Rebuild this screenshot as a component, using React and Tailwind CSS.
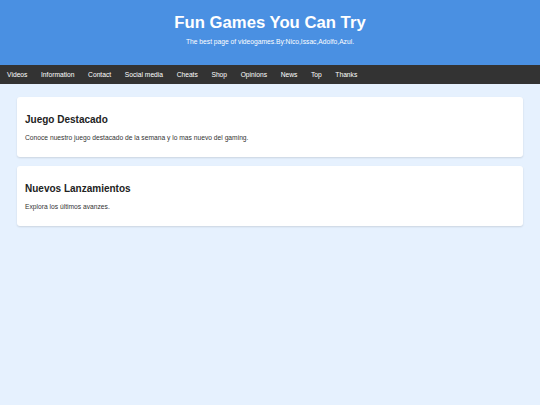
const navItems = ['Videos', 'Information', 'Contact', 'Social media', 'Cheats', 'Shop', 'Opinions', 'News', 'Top', 'Thanks'];

const sections = [
  {
    title: 'Juego Destacado',
    text: 'Conoce nuestro juego destacado de la semana y lo mas nuevo del gaming.',
  },
  {
    title: 'Nuevos Lanzamientos',
    text: 'Explora los últimos avanzes.',
  },
];

const Card = ({ title, text }) => (
  <section className="rounded-[3px] bg-white px-[8px] pt-[17px] pb-[15px] shadow-[0_1px_2px_rgba(0,0,0,0.12)]">
    <h2 className="text-[10px] leading-[12px] font-bold text-[#222]">{title}</h2>
    <p className="mt-[8px] text-[6.7px] leading-[8px] text-[#333]">{text}</p>
  </section>
);

export default function App() {
  return (
    <div className="min-h-screen bg-[#e6f1fe] font-['Liberation_Sans',Arial,sans-serif]">
      <header className="bg-[#4a90e2] pt-[13px] pb-[19px] text-center text-white">
        <h1 className="text-[16.7px] leading-[20px] font-bold">Fun Games You Can Try</h1>
        <p className="mt-[5px] text-[6.7px] leading-[8px]">The best page of videogames.By:Nico,Issac,Adolfo,Azul.</p>
      </header>

      <nav className="flex bg-[#333] pl-[0.3px]">
        {navItems.map((item) => (
          <a key={item} href="#" className="px-[6.8px] text-[6.7px] leading-[19px] text-white">
            {item}
          </a>
        ))}
      </nav>

      <main className="flex flex-col gap-[9px] px-[17px] pt-[13px]">
        {sections.map((s) => (
          <Card key={s.title} title={s.title} text={s.text} />
        ))}
      </main>
    </div>
  );
}
